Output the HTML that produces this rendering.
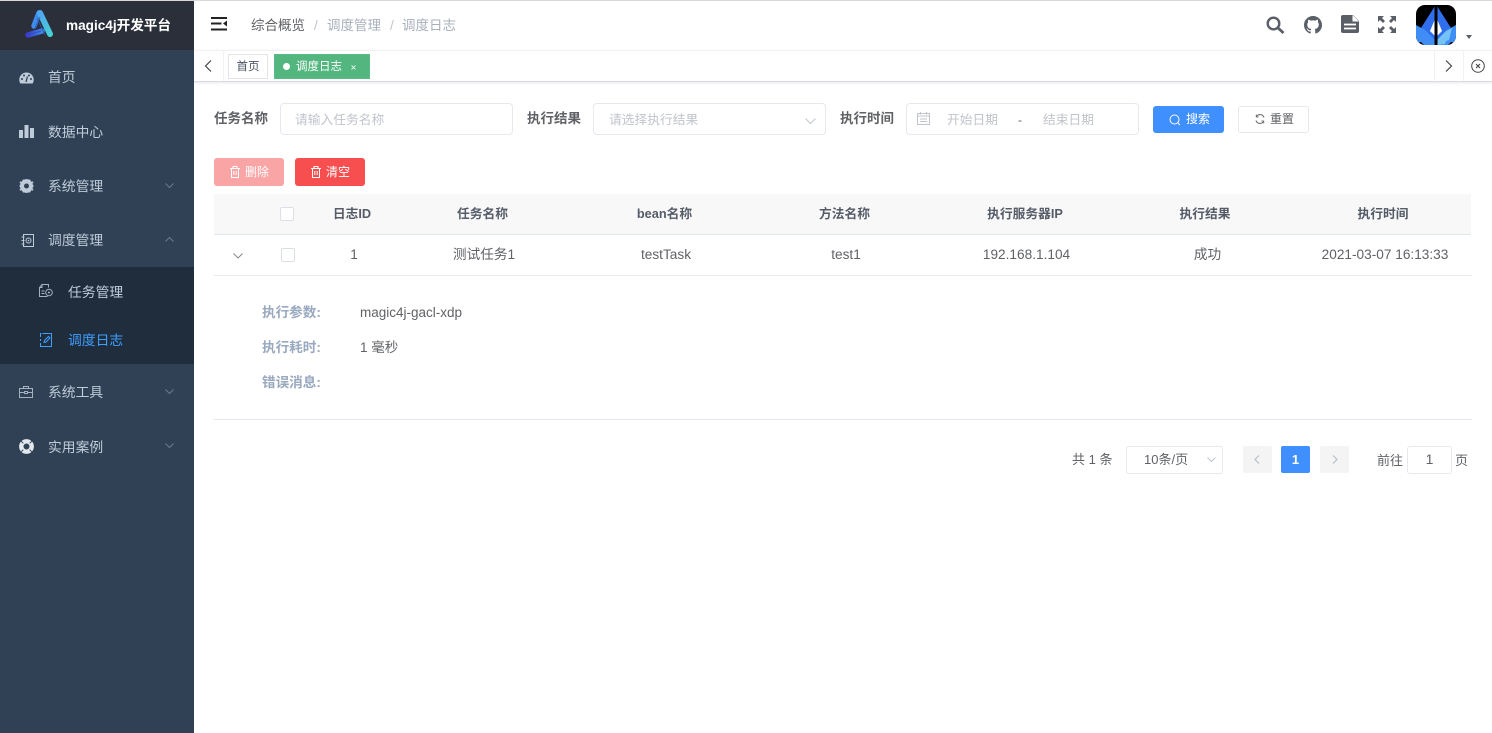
<!DOCTYPE html>
<html><head><meta charset="utf-8"><style>
*{box-sizing:border-box;margin:0;padding:0}
html,body{width:1492px;height:733px;overflow:hidden;background:#fff;font-family:"Liberation Sans","Noto Sans CJK SC",sans-serif;color:#606266}
#w{position:absolute;left:0;top:0;width:1492px;height:733px;overflow:hidden;filter:blur(.3px)}
.a{position:absolute;white-space:nowrap}
svg{position:absolute;overflow:visible}
.m{left:48px;font-size:13.8px;color:#bfcbd9;line-height:20px}
.th{top:205px;line-height:18px;font-size:12.75px;font-weight:700;color:#555c68;transform:translateX(-50%)}
.td{top:245px;line-height:20px;font-size:13.65px;color:#606266;transform:translateX(-50%)}
.box{border:1px solid #e6e8ee;border-radius:4px;background:#fff}
.ph{font-size:12.75px;color:#c0c4cc;line-height:16px}
.dk{font-size:13.6px;font-weight:700;color:#99a9bf;left:262px;line-height:18px}
.fl{font-size:13.5px;font-weight:700;color:#606266;line-height:20px;top:109px}
.bc{top:16px;font-size:13.5px;line-height:20px;color:#a9b0bd}
</style></head><body><div id="w">
<div class="a" style="left:0;top:0;width:1492px;height:1px;background:#d8d8d8"></div>
<!-- sidebar -->
<div class="a" style="left:0;top:1px;width:194px;height:732px;background:#304156"></div>
<div class="a" style="left:0;top:1px;width:194px;height:49px;background:#2b2f3a"></div>
<svg style="left:23px;top:9px" width="34" height="32" viewBox="0 0 34 32"><defs><linearGradient id="g1" x1="0" y1="0" x2="1" y2="0"><stop offset="0" stop-color="#3a3ccf"/><stop offset="1" stop-color="#3f86ec"/></linearGradient><linearGradient id="g2" gradientUnits="userSpaceOnUse" x1="16" y1="3" x2="27" y2="27"><stop offset="0" stop-color="#4fa6f2"/><stop offset="1" stop-color="#46d2d6"/></linearGradient></defs>
<path d="M16 4 L11 17" stroke="#3f8cec" stroke-width="5.500" stroke-linecap="round" fill="none"/>
<path d="M5 26 L19 22" stroke="url(#g1)" stroke-width="5.500" stroke-linecap="round" fill="none"/>
<path d="M17 4 L27 25" stroke="url(#g2)" stroke-width="6" stroke-linecap="round" fill="none"/>
<path d="M5 26 L18 22M14 9 L22 26M17 8 L12 19" stroke="#2c55a8" stroke-width="1" fill="none" opacity=".8"/></svg>
<div class="a" style="left:66px;top:17px;font-size:13.6px;font-weight:700;color:#fff;line-height:18px">magic4j开发平台</div>

<svg style="left:19px;top:72px" width="15" height="12" viewBox="0 0 15 12"><path d="M7.5 0.5A7.2 7.2 0 0 0 0.3 7.7c0 1.500.4 2.800 1.100 3.800h12.200c.7-1 1.100-2.300 1.100-3.800A7.200 7.200 0 0 0 7.500.5z" fill="#bfcbd9"/><circle cx="3" cy="7" r="1" fill="#304156"/><circle cx="5" cy="3.500" r="1" fill="#304156"/><circle cx="10" cy="3.500" r="1" fill="#304156"/><circle cx="12" cy="7" r="1" fill="#304156"/><path d="M7 10L8.500 4.500" stroke="#304156" stroke-width="1.300"/></svg>
<div class="a m" style="top:68px">首页</div>
<svg style="left:19px;top:125px" width="15" height="13" viewBox="0 0 15 13"><path d="M0 5h4v8H0zM5.500 0h4v13h-4zM11 3h4v10h-4z" fill="#bfcbd9"/></svg>
<div class="a m" style="top:123px">数据中心</div>
<svg style="left:19px;top:179px" width="15" height="14" viewBox="0 0 15 14"><path d="M4 .5h7l3.700 6.500L11 13.500H4L.3 7z" fill="#bfcbd9"/><path d="M7.500 0v1.500M7.500 12.500V14M1 3l1.500 1M14 3l-1.500 1M1 11l1.500-1M14 11l-1.500-1" stroke="#bfcbd9" stroke-width="2"/><circle cx="7.500" cy="7" r="2.500" fill="#304156"/></svg>
<div class="a m" style="top:177px">系统管理</div>
<svg style="left:165px;top:183px" width="9" height="5" viewBox="0 0 9 5"><path d="M.5.500l4 4 4-4" fill="none" stroke="#6d7a8c"/></svg>
<svg style="left:21px;top:234px" width="13" height="13" viewBox="0 0 13 13"><path d="M2.500.5h10v12h-10zM.5 3h3M.5 6.500h3M.5 10h3" fill="none" stroke="#bfcbd9"/><circle cx="7.500" cy="6.500" r="2.500" fill="none" stroke="#bfcbd9"/><circle cx="7.500" cy="6.500" r=".8" fill="#bfcbd9"/></svg>
<div class="a m" style="top:231px">调度管理</div>
<svg style="left:165px;top:237px" width="9" height="5" viewBox="0 0 9 5"><path d="M.5 4.500l4-4 4 4" fill="none" stroke="#6d7a8c"/></svg>
<div class="a" style="left:0;top:267px;width:194px;height:97px;background:#1f2d3d"></div>
<svg style="left:39px;top:284px" width="14" height="14" viewBox="0 0 14 14"><path d="M8.500 12.500H.5V3.500L3 .5h6.500v3M.7 3.500H3V.7M2.500 7h3M2.500 9.500h3" fill="none" stroke="#a5b1bf"/><circle cx="10" cy="8.500" r="3.300" fill="#1f2d3d" stroke="#a5b1bf"/><circle cx="10" cy="8.500" r="1" fill="#a5b1bf"/></svg>
<div class="a m" style="left:68px;top:283px">任务管理</div>
<svg style="left:40px;top:333px" width="12" height="14" viewBox="0 0 12 14"><path d="M2.500.5h9v13H.5V10M.5 8V6M.5 4V.5h1" fill="none" stroke="#409eff"/><path d="M4 9.500l.5-2L8.500 3.500l1.500 1.500-4 4z" fill="none" stroke="#409eff"/></svg>
<div class="a m" style="left:68px;top:331px;color:#409eff">调度日志</div>
<svg style="left:19px;top:386px" width="14" height="12" viewBox="0 0 14 12"><path d="M.5 2.500h13v9H.5zM4.500 2.500V.5h5v2M.5 6.500h5M8.500 6.500h5M5.500 5.500h3v2h-3z" fill="none" stroke="#a5b1bf"/></svg>
<div class="a m" style="top:383px">系统工具</div>
<svg style="left:165px;top:389px" width="9" height="5" viewBox="0 0 9 5"><path d="M.5.500l4 4 4-4" fill="none" stroke="#6d7a8c"/></svg>
<svg style="left:19px;top:439px" width="15" height="15" viewBox="0 0 15 15"><circle cx="7.500" cy="7.500" r="5.200" fill="none" stroke="#e3e8ee" stroke-width="4.400"/><path d="M7.500 0v3M7.500 12v3M0 7.500h3M12 7.500h3" stroke="#304156" stroke-width="1" transform="rotate(45 7.500 7.500)"/></svg>
<div class="a m" style="top:438px">实用案例</div>
<svg style="left:165px;top:443px" width="9" height="5" viewBox="0 0 9 5"><path d="M.5.500l4 4 4-4" fill="none" stroke="#6d7a8c"/></svg>

<!-- navbar -->
<svg style="left:211px;top:16px" width="16" height="15" viewBox="0 0 16 15"><path d="M0 2h16M0 7.500h10.500M0 13.500h16" stroke="#222" stroke-width="2" fill="none"/><path d="M16 4.500v6l-4-3z" fill="#222"/></svg>
<div class="a bc" style="left:251px;color:#606266">综合概览</div>
<div class="a bc" style="left:314px;color:#c0c4cc">/</div>
<div class="a bc" style="left:327px">调度管理</div>
<div class="a bc" style="left:390px;color:#c0c4cc">/</div>
<div class="a bc" style="left:402px">调度日志</div>
<svg style="left:1266px;top:16px" width="19" height="18" viewBox="0 0 19 18"><circle cx="7.500" cy="7.500" r="5.800" fill="none" stroke="#5a5e66" stroke-width="2.400"/><path d="M11.500 11.500l6 5.500" stroke="#5a5e66" stroke-width="2.800"/></svg>
<svg style="left:1304px;top:16px" width="18" height="18" viewBox="0 0 16 16"><path fill="#5a5e66" fill-rule="evenodd" d="M8 0C3.580 0 0 3.580 0 8c0 3.540 2.290 6.530 5.470 7.590.4.070.55-.17.55-.38 0-.19-.01-.82-.01-1.490-2.010.37-2.530-.49-2.690-.94-.09-.23-.48-.94-.82-1.130-.28-.15-.68-.52-.01-.53.63-.01 1.080.58 1.230.82.72 1.210 1.870.87 2.330.66.070-.52.280-.87.510-1.070-1.780-.2-3.640-.89-3.640-3.950 0-.87.310-1.590.82-2.150-.08-.2-.36-1.020.08-2.120 0 0 .67-.21 2.200.82.640-.18 1.320-.27 2-.27s1.360.09 2 .27c1.530-1.040 2.200-.82 2.200-.82.44 1.100.16 1.920.08 2.120.51.560.82 1.270.82 2.150 0 3.070-1.870 3.750-3.650 3.950.29.250.54.730.54 1.480 0 1.070-.01 1.930-.01 2.200 0 .21.150.46.550.38A8.010 8.010 0 0 0 16 8c0-4.420-3.580-8-8-8z"/></svg>
<svg style="left:1341px;top:15px" width="18" height="18" viewBox="0 0 18 18"><path d="M2 0h10l6 6v10a2 2 0 0 1-2 2H2a2 2 0 0 1-2-2V2a2 2 0 0 1 2-2z" fill="#5a5e66"/><path d="M11.500 0v6.500H18" fill="#fff"/><path d="M3 9.500h12M3 13.500h12" stroke="#fff" stroke-width="1.800"/></svg>
<svg style="left:1378px;top:16px" width="18" height="17" viewBox="0 0 18 17"><path d="M0 0h6L4 2l3 3-2 2-3-3-2 2zM18 0h-6l2 2-3 3 2 2 3-3 2 2zM0 17h6l-2-2 3-3-2-2-3 3-2-2zM18 17h-6l2-2-3-3 2-2 3 3 2-2z" fill="#5a5e66"/></svg>
<svg style="left:1416px;top:5px" width="40" height="40" viewBox="0 0 40 40"><defs><clipPath id="cp"><rect width="40" height="40" rx="9"/></clipPath></defs><g clip-path="url(#cp)"><rect width="40" height="40" fill="#000"/><path d="M19 1L5 23l14 17z" fill="#2f6fee"/><path d="M21 1l14 22-14 17z" fill="#2f6fee"/><path d="M19 14l-5 12 5 5zM21 14l5 12-5 5z" fill="#fff"/><path d="M0 20l9 5 10 10v5H8l-3-3-5 1z" fill="#3f8df5"/><path d="M40 20l-9 5-10 10v5h11l3-3 5 1z" fill="#3f8df5"/><path d="M21 35l9-9 6-3-3 12-3 1-1 3-8 1z" fill="#74c2f6"/><rect x="18.500" width="3" height="40" fill="#000"/></g></svg>
<div class="a" style="left:1466px;top:35px;border-left:3.500px solid transparent;border-right:3.500px solid transparent;border-top:4px solid #5a5e66"></div>

<!-- tags -->
<div class="a" style="left:194px;top:50px;width:1298px;height:32px;border-top:1px solid #f2f2f2;border-bottom:1px solid #d8dce5;box-shadow:0 1px 3px rgba(0,0,0,.1);background:#fff"></div>
<div class="a" style="left:223px;top:51px;width:1px;height:30px;background:#f2f2f2"></div>
<div class="a" style="left:1434px;top:51px;width:1px;height:30px;background:#f2f2f2"></div>
<div class="a" style="left:1463px;top:51px;width:1px;height:30px;background:#f2f2f2"></div>
<svg style="left:204px;top:60px" width="8" height="12" viewBox="0 0 8 12"><path d="M7 .5L1.500 6 7 11.500" fill="none" stroke="#444" stroke-width="1.200"/></svg>
<div class="a" style="left:228px;top:54px;width:40px;height:25px;border:1px solid #e3e5ea;font-size:11.5px;line-height:25px;text-align:center;color:#495060;background:#fff">首页</div>
<div class="a" style="left:274px;top:54px;width:96px;height:25px;background:#54b67f;border:1px solid #5bbb86;color:#fff;font-size:11.5px;line-height:25px;padding-left:21px">调度日志</div>
<div class="a" style="left:283px;top:63px;width:7px;height:7px;border-radius:50%;background:#fff"></div>
<svg style="left:351px;top:65px" width="5" height="5" viewBox="0 0 5 5"><path d="M.5.500l4 4M4.500.500l-4 4" stroke="#d8efe2" stroke-width="1"/></svg>
<svg style="left:1445px;top:60px" width="8" height="12" viewBox="0 0 8 12"><path d="M1 .5L6.500 6 1 11.500" fill="none" stroke="#444" stroke-width="1.200"/></svg>
<svg style="left:1471px;top:59px" width="14" height="14" viewBox="0 0 14 14"><circle cx="7" cy="7" r="6.300" fill="none" stroke="#444" stroke-width="1"/><path d="M5 5l4 4M9 5L5 9" stroke="#444" stroke-width="1.100"/></svg>

<!-- search form -->
<div class="a fl" style="left:214px">任务名称</div>
<div class="a box" style="left:280px;top:103px;width:233px;height:32px"></div>
<div class="a ph" style="left:295px;top:112px">请输入任务名称</div>
<div class="a fl" style="left:527px">执行结果</div>
<div class="a box" style="left:593px;top:103px;width:233px;height:32px"></div>
<div class="a ph" style="left:609px;top:112px">请选择执行结果</div>
<svg style="left:805px;top:118px" width="11" height="6" viewBox="0 0 11 6"><path d="M.5.500l5 5 5-5" fill="none" stroke="#c0c4cc"/></svg>
<div class="a fl" style="left:840px">执行时间</div>
<div class="a box" style="left:906px;top:103px;width:233px;height:32px"></div>
<svg style="left:917px;top:112px" width="13" height="13" viewBox="0 0 13 13"><path d="M.5 1.500h12v11H.5zM.5 4h12M3.500 0v2.500M9.500 0v2.500M3 7h7M3 9.500h7" fill="none" stroke="#c0c4cc"/></svg>
<div class="a ph" style="left:947px;top:112px">开始日期</div>
<div class="a" style="left:1018px;top:112px;font-size:12px;line-height:16px;color:#606266">-</div>
<div class="a ph" style="left:1043px;top:112px">结束日期</div>
<div class="a" style="left:1153px;top:106px;width:71px;height:27px;border-radius:3px;background:#3f8fff;color:#fff;font-size:12px;line-height:27px;padding-left:33px">搜索</div>
<svg style="left:1169px;top:114px" width="12" height="12" viewBox="0 0 12 12"><circle cx="5.500" cy="5.500" r="4.500" fill="none" stroke="#fff"/><path d="M9 9l2 2" stroke="#fff"/></svg>
<div class="a box" style="left:1238px;top:106px;width:71px;height:27px;border-radius:3px;color:#606266;font-size:12px;line-height:25px;padding-left:31px">重置</div>
<svg style="left:1255px;top:114px" width="10" height="10" viewBox="0 0 10 10"><path d="M9 3.500A4.200 4.200 0 0 0 1.500 2.500M1 6.500A4.200 4.200 0 0 0 8.500 7.500" fill="none" stroke="#606266"/><path d="M1.200.5v2.500h2.500M8.800 9.500V7H6.300" fill="none" stroke="#606266" stroke-width=".7"/></svg>

<!-- actions -->
<div class="a" style="left:214px;top:158px;width:70px;height:28px;border-radius:3px;background:#faa5a5;color:#fff;font-size:12px;line-height:28px;padding-left:31px">删除</div>
<svg style="left:230px;top:166px" width="10" height="12" viewBox="0 0 10 12"><path d="M0 2.500h10M3 2.500V.5h4v2M1.500 2.500v9h7v-9M3.800 5v4M6.200 5v4" fill="none" stroke="#fff"/></svg>
<div class="a" style="left:295px;top:158px;width:70px;height:28px;border-radius:3px;background:#f74f50;color:#fff;font-size:12px;line-height:28px;padding-left:31px">清空</div>
<svg style="left:311px;top:166px" width="10" height="12" viewBox="0 0 10 12"><path d="M0 2.500h10M3 2.500V.5h4v2M1.500 2.500v9h7v-9M3.800 5v4M6.200 5v4" fill="none" stroke="#fff"/></svg>

<!-- table -->
<div class="a" style="left:214px;top:194px;width:1257px;height:41px;background:#f8f8f9;border-bottom:1px solid #dfe6ec"></div>
<div class="a" style="left:280px;top:207px;width:14px;height:14px;background:#fff;border:1px solid #dcdfe6;border-radius:2px"></div>
<div class="a th" style="left:352px">日志ID</div>
<div class="a th" style="left:482.500px">任务名称</div>
<div class="a th" style="left:664.500px">bean名称</div>
<div class="a th" style="left:844.500px">方法名称</div>
<div class="a th" style="left:1025px">执行服务器IP</div>
<div class="a th" style="left:1205px">执行结果</div>
<div class="a th" style="left:1383px">执行时间</div>
<svg style="left:233px;top:253px" width="10" height="6" viewBox="0 0 10 6"><path d="M.5.500L5 5 9.500.500" fill="none" stroke="#888"/></svg>
<div class="a" style="left:281px;top:248px;width:14px;height:14px;background:#fff;border:1px solid #dcdfe6;border-radius:2px"></div>
<div class="a td" style="left:354px">1</div>
<div class="a td" style="left:484px">测试任务1</div>
<div class="a td" style="left:666px">testTask</div>
<div class="a td" style="left:846px">test1</div>
<div class="a td" style="left:1026.500px">192.168.1.104</div>
<div class="a td" style="left:1207.500px">成功</div>
<div class="a td" style="left:1385px">2021-03-07 16:13:33</div>
<div class="a" style="left:214px;top:275px;width:1258px;height:1px;background:#e8ecf1"></div>
<div class="a dk" style="top:304px">执行参数:</div>
<div class="a" style="left:360px;top:304px;font-size:13.500px;line-height:18px;color:#606266">magic4j-gacl-xdp</div>
<div class="a dk" style="top:339px">执行耗时:</div>
<div class="a" style="left:360px;top:339px;font-size:13.500px;line-height:18px;color:#606266">1 毫秒</div>
<div class="a dk" style="top:374px">错误消息:</div>
<div class="a" style="left:214px;top:419px;width:1258px;height:1px;background:#e3e8f0"></div>

<!-- pagination -->
<div class="a" style="left:1072px;top:451px;font-size:13px;line-height:18px;color:#606266">共 1 条</div>
<div class="a box" style="left:1126px;top:446px;width:97px;height:28px;border-radius:3px"></div>
<div class="a" style="left:1144px;top:451px;font-size:13px;line-height:18px;color:#606266">10条/页</div>
<svg style="left:1207px;top:457px" width="9" height="5" viewBox="0 0 9 5"><path d="M.5.500l4 4 4-4" fill="none" stroke="#c0c4cc"/></svg>
<div class="a" style="left:1243px;top:446px;width:29px;height:27px;background:#f4f4f5;border-radius:2px"></div>
<svg style="left:1254px;top:455px" width="6" height="9" viewBox="0 0 6 9"><path d="M5 .5l-4 4 4 4" fill="none" stroke="#c0c4cc" stroke-width="1.300"/></svg>
<div class="a" style="left:1281px;top:446px;width:29px;height:27px;background:#3f8fff;border-radius:2px;color:#fff;font-size:13px;font-weight:700;line-height:27px;text-align:center">1</div>
<div class="a" style="left:1320px;top:446px;width:29px;height:27px;background:#f4f4f5;border-radius:2px"></div>
<svg style="left:1332px;top:455px" width="6" height="9" viewBox="0 0 6 9"><path d="M1 .5l4 4-4 4" fill="none" stroke="#c0c4cc" stroke-width="1.300"/></svg>
<div class="a" style="left:1377px;top:452px;font-size:13px;line-height:18px;color:#606266">前往</div>
<div class="a box" style="left:1407px;top:446px;width:45px;height:28px;border-radius:3px;font-size:14px;line-height:25px;text-align:center;color:#606266">1</div>
<div class="a" style="left:1455px;top:452px;font-size:13px;line-height:18px;color:#606266">页</div>
</div></body></html>
